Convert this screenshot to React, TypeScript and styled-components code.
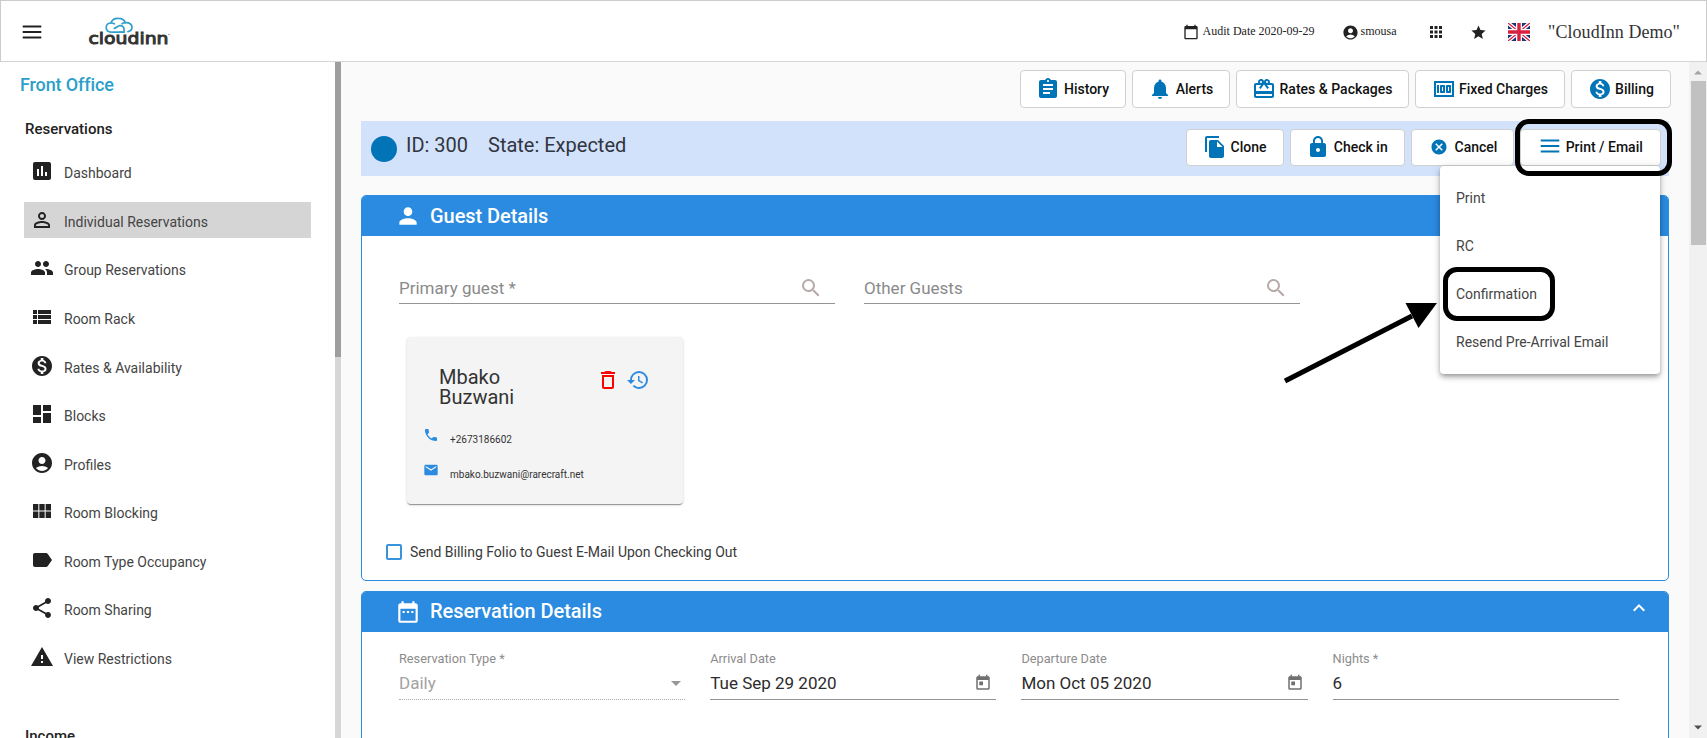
import React from 'react';
import type { ReactNode } from 'react';
import styled, { createGlobalStyle } from 'styled-components';
import {
  MdAccountCircle, MdApps, MdArrowDropDown, MdAssessment, MdAssignment, MdCalendarToday,
  MdCancel, MdCardGiftcard, MdDashboard, MdDateRange, MdDeleteOutline, MdEmail, MdFileCopy,
  MdHistory, MdKeyboardArrowUp, MdLabel, MdLock, MdMoney, MdMonetizationOn, MdNotifications,
  MdPeople, MdPermIdentity, MdPerson, MdPhone, MdSearch, MdShare, MdStar, MdToday, MdViewList,
  MdViewModule, MdWarning,
} from 'react-icons/md';

const blue = '#2a8be0';
const deepBlue = '#0074b7';

const Global = createGlobalStyle`
  *, *::before, *::after { box-sizing: border-box; }
  body { margin: 0; background: #fafafa; overflow: hidden; }
  svg { display: block; flex: none; }
`;

const Page = styled.div`
  display: flex;
  flex-direction: column;
  position: relative;
  width: 100%;
  height: 738px;
  overflow: hidden;
  font-family: Roboto, "Liberation Sans", sans-serif;
  color: rgba(0, 0, 0, 0.78);
`;

/* ---------- top bar ---------- */

const TopBar = styled.header`
  display: flex;
  align-items: center;
  flex: none;
  height: 62px;
  padding: 4px 26px 0 19px;
  background: #fff;
  border: 1px solid #ccc;
  border-bottom-color: #d4d4d4;
  font-family: "Liberation Serif", "Times New Roman", serif;
`;

const Logo = styled.svg`
  margin: 0 0 2px 44px;
  overflow: visible;
`;

const TopRight = styled.div`
  display: flex;
  align-items: center;
  margin-left: auto;
  padding-bottom: 2px;
  color: #222;
`;

const TopItem = styled.div<{ $space: number; $gap?: number }>`
  display: flex;
  align-items: center;
  gap: ${(p) => p.$gap ?? 0}px;
  margin-right: ${(p) => p.$space}px;
`;

const TopLabel = styled.span`
  font-size: 12px;
  line-height: 14px;
  padding-bottom: 3px;
`;

const Company = styled.span`
  font-size: 18px;
  line-height: 20px;
  letter-spacing: 0.05px;
  color: #333;
`;

/* ---------- side navigation ---------- */

const Body = styled.div`
  display: flex;
  flex: 1;
  min-height: 0;
`;

const Sidebar = styled.nav`
  width: 335px;
  flex: none;
  padding: 12px 24px 0;
  background: #fff;
`;

const ModuleTitle = styled.h1`
  margin: 0 0 0 -4px;
  font-size: 18px;
  line-height: 22px;
  font-weight: 500;
  letter-spacing: -0.12px;
  color: #2b9fc9;
`;

const GroupTitle = styled.h2<{ $top: number }>`
  margin: ${(p) => p.$top}px 0 0 1px;
  font-size: 15px;
  line-height: 18px;
  font-weight: 500;
  color: #222;
`;

const NavList = styled.ul`
  margin: 9px 0 0;
  padding: 0;
  list-style: none;
`;

const NavRow = styled.li`
  display: flex;
  align-items: center;
  height: 48.57px;
`;

const NavLink = styled.a<{ $active?: boolean }>`
  display: flex;
  align-items: center;
  flex: 1;
  gap: 10px;
  height: 36px;
  padding-left: 6px;
  background: ${(p) => (p.$active ? '#d5d5d5' : 'transparent')};
  color: #222;
`;

const NavText = styled.span`
  padding-top: 4px;
  font-size: 14px;
  line-height: 18px;
  color: #444;
`;

const SideScroll = styled.div`
  width: 6px;
  flex: none;
  background: #d6d6d6;
`;

const SideThumb = styled.div`
  height: 295px;
  background: #9e9e9e;
`;

/* ---------- main column ---------- */

const Main = styled.main`
  flex: 1;
  min-width: 0;
  padding: 8px 20px 0 20px;
  overflow: hidden;
  background: #fafafa;
`;

const Tools = styled.div`
  display: flex;
  justify-content: flex-end;
  gap: 6.5px;
  margin-right: -1.5px;
`;

const Button = styled.button<{ $w: number; $h: number }>`
  display: flex;
  align-items: center;
  justify-content: center;
  gap: 3.5px;
  flex: none;
  width: ${(p) => p.$w}px;
  height: ${(p) => p.$h}px;
  padding: 0 0 1px;
  border: 1px solid #d0d0d0;
  border-radius: 4px;
  background: #fff;
  font: 500 14px/18px Roboto, "Liberation Sans", sans-serif;
  color: #111;
  white-space: nowrap;
`;

const ButtonIcon = styled.span`
  display: flex;
  align-items: center;
  justify-content: center;
  width: 24px;
  height: 24px;
  color: ${deepBlue};
`;

const StatusBar = styled.section`
  display: flex;
  align-items: flex-start;
  height: 55px;
  margin-top: 13px;
  padding: 8px 8px 0 10px;
  background: #d3e2fb;
`;

const StatusDot = styled.span`
  width: 26px;
  height: 26px;
  margin: 6.5px 9px 0 0;
  border-radius: 50%;
  background: ${deepBlue};
`;

const StatusText = styled.span<{ $w?: number }>`
  width: ${(p) => (p.$w ? `${p.$w}px` : 'auto')};
  padding-top: 4px;
  font-size: 20px;
  line-height: 24px;
  color: #30353f;
`;

const StatusActions = styled.div`
  display: flex;
  gap: 6px;
  margin-left: auto;
`;

/* ---------- panels ---------- */

const Panel = styled.section<{ $top: number; $h: number }>`
  height: ${(p) => p.$h}px;
  margin-top: ${(p) => p.$top}px;
  border: 1px solid ${blue};
  border-radius: 5px;
  background: #fff;
  overflow: hidden;
`;

const PanelHead = styled.header`
  display: flex;
  align-items: center;
  height: 40px;
  padding: 0 17px 0 33px;
  background: ${blue};
  color: #fff;
`;

const PanelTitle = styled.h3<{ $lift?: number }>`
  flex: 1;
  margin: 0 0 0 9px;
  padding-bottom: ${(p) => p.$lift ?? 0}px;
  font-size: 20px;
  line-height: 24px;
  font-weight: 500;
  letter-spacing: -0.06px;
`;

const Collapse = styled.span`
  padding-bottom: 8px;
`;

const SearchRow = styled.div`
  display: flex;
  gap: 29.5px;
  padding: 36px 0 0 37px;
`;

const SearchField = styled.div`
  display: flex;
  align-items: center;
  justify-content: space-between;
  width: 435.5px;
  height: 32px;
  padding: 0 12px 0 0;
  border-bottom: 1px solid #949494;
  font-size: 17px;
  line-height: 20px;
  color: #8a8a8a;

  svg { color: #b8a9a9; }
`;

const GuestCard = styled.article`
  width: 276px;
  height: 167px;
  margin: 33px 0 0 44.5px;
  padding: 30px 0 0;
  border-radius: 4px;
  background: #f4f4f4;
  box-shadow: 0 2px 1px -1px rgba(0, 0, 0, 0.25), 0 1px 1px rgba(0, 0, 0, 0.16),
    0 1px 3px rgba(0, 0, 0, 0.14);
`;

const GuestTop = styled.div`
  display: flex;
  padding-left: 32.5px;
`;

const GuestName = styled.div`
  width: 157px;
  padding-right: 70px;
  font-size: 20px;
  line-height: 20px;
  color: #333;
`;

const GuestIcons = styled.div`
  display: flex;
  gap: 6px;
  padding-top: 1px;
`;

const Contacts = styled.div`
  margin-top: 10px;
  padding-left: 16px;
  color: ${blue};
`;

const Contact = styled.div`
  display: flex;
  align-items: center;
  gap: 11.5px;
  height: 35px;
`;

const ContactText = styled.span`
  padding-top: 11px;
  font-size: 10px;
  line-height: 12px;
  color: #333;
`;

const CheckRow = styled.label`
  display: flex;
  align-items: center;
  gap: 8px;
  margin: 40px 0 0 24px;
  font-size: 14px;
  line-height: 16px;
  color: #3a3a3a;
`;

const CheckBox = styled.span`
  width: 16px;
  height: 16px;
  border: 2px solid #3894de;
  border-radius: 2px;
  background: #fff;
`;

const Fields = styled.div`
  display: grid;
  grid-template-columns: repeat(4, 286.3px);
  column-gap: 24.9px;
  padding: 19px 0 0 37px;
`;

const FieldLabel = styled.div`
  font-size: 12.75px;
  line-height: 16px;
  color: #8c8c8c;
`;

const FieldValue = styled.div<{ $disabled?: boolean; $end: number }>`
  display: flex;
  align-items: center;
  justify-content: space-between;
  height: 33px;
  padding-right: ${(p) => p.$end}px;
  border-bottom: 1px ${(p) => (p.$disabled ? 'dotted #aaa' : 'solid #949494')};
  font-size: 17px;
  color: ${(p) => (p.$disabled ? '#a2a2a2' : '#2c2c2c')};

  svg {
    margin-right: ${(p) => (p.$disabled ? '-3px' : '0')};
    color: ${(p) => (p.$disabled ? '#979797' : '#707070')};
  }
`;

/* ---------- page scroll bar ---------- */

const Scroll = styled.div`
  display: flex;
  flex-direction: column;
  align-items: center;
  flex: none;
  width: 18px;
  padding: 8px 0 8px 0;
  background: #f1f1f1;
`;

const ScrollThumb = styled.div`
  width: 15px;
  height: 164px;
  margin: 6px 0 auto;
  background: #c1c1c1;
`;

/* ---------- dropdown menu and callouts ---------- */

const Menu = styled.div`
  position: absolute;
  top: 166px;
  left: 1440px;
  width: 220px;
  padding: 8px 0;
  border-radius: 4px;
  background: #fff;
  box-shadow: 0 2px 4px -1px rgba(0, 0, 0, 0.25), 0 4px 5px rgba(0, 0, 0, 0.16),
    0 1px 10px rgba(0, 0, 0, 0.14);
`;

const MenuItem = styled.div`
  height: 48px;
  padding: 0 16px;
  font-size: 14px;
  line-height: 48px;
  color: #444;
`;

const Callout = styled.div<{ $x: number; $y: number; $w: number; $h: number; $r: number }>`
  position: absolute;
  left: ${(p) => p.$x}px;
  top: ${(p) => p.$y}px;
  width: ${(p) => p.$w}px;
  height: ${(p) => p.$h}px;
  border: 5px solid #000;
  border-radius: ${(p) => p.$r}px;
`;

const Arrow = styled.svg`
  position: absolute;
  left: 1280px;
  top: 296px;
`;

/* ---------- drawings ---------- */

const Lines = ({ color }: { color: string }) => (
  <svg width="24" height="24" viewBox="0 0 24 24" stroke={color} strokeWidth="1.8">
    <path d="M2.7 5.5H21.3M2.7 11H21.3M2.7 16.5H21.3" />
  </svg>
);

const BrandLogo = () => (
  <Logo width="84" height="34" viewBox="0 0 84 34">
    <g fill="none" stroke="#2f9fcb" strokeWidth="1.7" strokeLinecap="round">
      <path d="M33.5 17.2H24.5C20.4 17.2 18.2 15 18.2 12.4C18.2 9.8 20.2 8 22.9 8C24 4.8 27 3.2 30.6 3.4C33.9 3.5 36.4 5.2 37.2 7.6C41.3 7.2 44 9.4 44 12.3C44 14.6 42.4 16.2 40 16.6" />
      <path d="M37.2 7.6C36 7.7 34.9 8.1 34.1 8.7" />
      <path d="M22.9 8C24.3 7.9 25.4 8.2 26.3 8.8" />
      <path d="M26.3 13.4C28.4 12.8 29.4 11.2 31.4 10.7C34.2 10.2 36 12 36 14.2V17.2H32" />
    </g>
    <text
      x="0.5" y="29.2" textLength="80" lengthAdjust="spacingAndGlyphs"
      fontFamily="DejaVu Sans, sans-serif" fontSize="16.5"
      fill="#333" stroke="#333" strokeWidth="1"
    >
      cloudinn
    </text>
    <circle cx="81" cy="19.5" r="0.8" fill="#999" />
  </Logo>
);

const Flag = () => (
  <svg width="22" height="18" viewBox="0 0 22 18">
    <rect width="22" height="18" fill="#1b2f73" />
    <path d="M0 0L22 18M22 0L0 18" stroke="#fff" strokeWidth="4" />
    <path d="M0 0L22 18M22 0L0 18" stroke="#d8203f" strokeWidth="1.3" />
    <path d="M11 0V18M0 9H22" stroke="#fff" strokeWidth="6" />
    <path d="M11 0V18M0 9H22" stroke="#d8203f" strokeWidth="3.4" />
  </svg>
);

const Triangle = ({ down }: { down?: boolean }) => (
  <svg width="8" height="5" viewBox="0 0 8 5">
    <path d={down ? 'M0 0.5H8L4 4.5Z' : 'M0 4.5H8L4 0.5Z'} fill={down ? '#505050' : '#a3a3a3'} />
  </svg>
);

/* ---------- data ---------- */

const nav: { label: string; icon: ReactNode }[] = [
  { label: 'Dashboard', icon: <MdAssessment size={24} /> },
  { label: 'Individual Reservations', icon: <MdPermIdentity size={24} /> },
  { label: 'Group Reservations', icon: <MdPeople size={24} /> },
  { label: 'Room Rack', icon: <MdViewList size={24} /> },
  { label: 'Rates & Availability', icon: <MdMonetizationOn size={24} /> },
  { label: 'Blocks', icon: <MdDashboard size={24} /> },
  { label: 'Profiles', icon: <MdAccountCircle size={24} /> },
  { label: 'Room Blocking', icon: <MdViewModule size={24} /> },
  { label: 'Room Type Occupancy', icon: <MdLabel size={24} /> },
  { label: 'Room Sharing', icon: <MdShare size={24} /> },
  { label: 'View Restrictions', icon: <MdWarning size={24} /> },
];

type Action = { label: string; icon: ReactNode; w: number };

const tools: Action[] = [
  { label: 'History', icon: <MdAssignment size={24} />, w: 105.5 },
  { label: 'Alerts', icon: <MdNotifications size={24} />, w: 97.5 },
  { label: 'Rates & Packages', icon: <MdCardGiftcard size={24} />, w: 172.5 },
  { label: 'Fixed Charges', icon: <MdMoney size={24} />, w: 149.5 },
  { label: 'Billing', icon: <MdMonetizationOn size={24} />, w: 99.5 },
];

const actions: Action[] = [
  { label: 'Clone', icon: <MdFileCopy size={24} />, w: 97.5 },
  { label: 'Check in', icon: <MdLock size={24} />, w: 115 },
  { label: 'Cancel', icon: <MdCancel size={18} />, w: 103.5 },
  { label: 'Print / Email', icon: <Lines color={deepBlue} />, w: 141 },
];

const menuItems = ['Print', 'RC', 'Confirmation', 'Resend Pre-Arrival Email'];

const renderButtons = (items: Action[], height: number) =>
  items.map((a) => (
    <Button key={a.label} $w={a.w} $h={height}>
      <ButtonIcon>{a.icon}</ButtonIcon>
      {a.label}
    </Button>
  ));

export default function App() {
  return (
    <Page>
      <Global />
      <TopBar>
        <Lines color="#222" />
        <BrandLogo />
        <TopRight>
          <TopItem $space={27} $gap={4}>
            <MdCalendarToday size={16} />
            <TopLabel>Audit Date 2020-09-29</TopLabel>
          </TopItem>
          <TopItem $space={30} $gap={2}>
            <MdAccountCircle size={17} />
            <TopLabel>smousa</TopLabel>
          </TopItem>
          <TopItem $space={25}><MdApps size={18} /></TopItem>
          <TopItem $space={21}><MdStar size={17} /></TopItem>
          <TopItem $space={18.5}><Flag /></TopItem>
          <Company>"CloudInn Demo"</Company>
        </TopRight>
      </TopBar>

      <Body>
        <Sidebar>
          <ModuleTitle>Front Office</ModuleTitle>
          <GroupTitle $top={24}>Reservations</GroupTitle>
          <NavList>
            {nav.map((n) => (
              <NavRow key={n.label}>
                <NavLink $active={n.label === 'Individual Reservations'}>
                  {n.icon}
                  <NavText>{n.label}</NavText>
                </NavLink>
              </NavRow>
            ))}
          </NavList>
          <GroupTitle $top={46}>Income</GroupTitle>
        </Sidebar>
        <SideScroll><SideThumb /></SideScroll>

        <Main>
          <Tools>{renderButtons(tools, 38)}</Tools>

          <StatusBar>
            <StatusDot />
            <StatusText $w={82}>ID: 300</StatusText>
            <StatusText>State: Expected</StatusText>
            <StatusActions>{renderButtons(actions, 37)}</StatusActions>
          </StatusBar>

          <Panel $top={19} $h={386}>
            <PanelHead>
              <MdPerson size={26} />
              <PanelTitle>Guest Details</PanelTitle>
              <Collapse><MdKeyboardArrowUp size={24} /></Collapse>
            </PanelHead>
            <SearchRow>
              <SearchField>Primary guest *<MdSearch size={24} /></SearchField>
              <SearchField>Other Guests<MdSearch size={24} /></SearchField>
            </SearchRow>
            <GuestCard>
              <GuestTop>
                <GuestName>Mbako Buzwani</GuestName>
                <GuestIcons>
                  <MdDeleteOutline size={24} color="#ff0000" />
                  <MdHistory size={24} color={blue} />
                </GuestIcons>
              </GuestTop>
              <Contacts>
                <Contact><MdPhone size={16} /><ContactText>+2673186602</ContactText></Contact>
                <Contact><MdEmail size={16} /><ContactText>mbako.buzwani@rarecraft.net</ContactText></Contact>
              </Contacts>
            </GuestCard>
            <CheckRow><CheckBox />Send Billing Folio to Guest E-Mail Upon Checking Out</CheckRow>
          </Panel>

          <Panel $top={10} $h={200}>
            <PanelHead>
              <MdDateRange size={26} />
              <PanelTitle $lift={2}>Reservation Details</PanelTitle>
              <Collapse><MdKeyboardArrowUp size={24} /></Collapse>
            </PanelHead>
            <Fields>
              <div>
                <FieldLabel>Reservation Type *</FieldLabel>
                <FieldValue $disabled $end={0}>Daily<MdArrowDropDown size={24} /></FieldValue>
              </div>
              <div>
                <FieldLabel>Arrival Date</FieldLabel>
                <FieldValue $end={4}>Tue Sep 29 2020<MdToday size={18} /></FieldValue>
              </div>
              <div>
                <FieldLabel>Departure Date</FieldLabel>
                <FieldValue $end={4}>Mon Oct 05 2020<MdToday size={18} /></FieldValue>
              </div>
              <div>
                <FieldLabel>Nights *</FieldLabel>
                <FieldValue $end={0}>6</FieldValue>
              </div>
            </Fields>
          </Panel>
        </Main>

        <Scroll>
          <Triangle />
          <ScrollThumb />
          <Triangle down />
        </Scroll>
      </Body>

      <Menu>
        {menuItems.map((m) => <MenuItem key={m}>{m}</MenuItem>)}
      </Menu>
      <Callout $x={1515} $y={119} $w={156.5} $h={57} $r={14} />
      <Callout $x={1442.5} $y={267} $w={112} $h={54} $r={14} />
      <Arrow width="160" height="90" viewBox="0 0 160 90">
        <path d="M5 85L132 20" stroke="#000" strokeWidth="5" />
        <path d="M125.5 7H157L138.5 32Z" fill="#000" />
      </Arrow>
    </Page>
  );
}
